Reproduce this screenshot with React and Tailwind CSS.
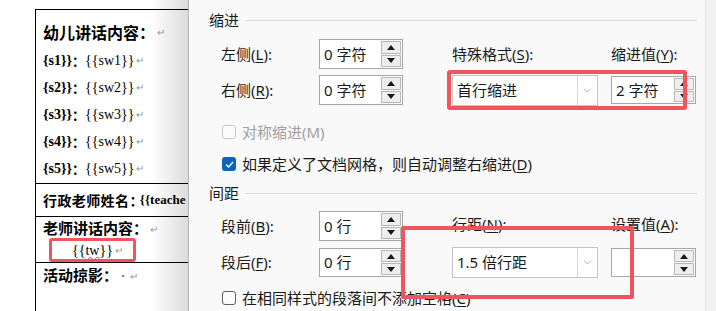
import React from "react";
import { ChevronDown } from "lucide-react";

const Arrow = ({ up }) => (
  <svg width="8" height="5" viewBox="0 0 8 5">
    <path d={up ? "M0 5 L4 0 L8 5 Z" : "M0 0 L4 5 L8 0 Z"} fill="#1a1a1a" />
  </svg>
);

const Spin = ({ value, w = "w-[85px]", h = "h-[30px]" }) => (
  <div className={`${w} ${h} flex border border-[#a6a6a6] bg-white`}>
    <div className="flex-1 flex items-center pl-[4px] text-[15px] text-[#1a1a1a]">{value}</div>
    <div className="w-[21px] flex flex-col gap-[1px] py-[1px] pr-[1px]">
      <div className="flex-1 flex items-center justify-center bg-[#eeeeee] border border-[#b8b8b8]">
        <Arrow up />
      </div>
      <div className="flex-1 flex items-center justify-center bg-[#eeeeee] border border-[#b8b8b8]">
        <Arrow />
      </div>
    </div>
  </div>
);

const Select = ({ value }) => (
  <div className="w-[146px] h-[31px] flex border border-[#c4c4c4] bg-white">
    <div className="flex-1 flex items-center pl-[4px] text-[15px] text-[#1a1a1a]">{value}</div>
    <div className="w-[20px] border-l border-[#d6d6d6] flex items-center justify-center">
      <ChevronDown size={13} strokeWidth={1} color="#6a6a6a" />
    </div>
  </div>
);

const Key = ({ k }) => <span className="underline underline-offset-2">{k}</span>;

const Section = ({ title }) => (
  <div className="h-[24px] flex items-center pl-[20px] pr-[8px]">
    <span className="text-[15px] text-[#1a1a1a]">{title}</span>
    <div className="flex-1 h-px bg-[#dedede] ml-[6px]" />
  </div>
);

const Mark = () => <span className="text-[10px] text-[#999] ml-[2px] font-normal">↵</span>;

const SLine = ({ n }) => (
  <div className="h-[27px] flex items-center text-[14px] font-['Liberation_Serif',serif] text-black">
    <span className="font-bold">{`{s${n}}}`}</span>
    <span className="font-bold font-['Noto_Sans_CJK_SC',sans-serif] text-[13px]">：</span>
    <span>{`{{sw${n}}}`}</span>
    <Mark />
  </div>
);

const App = () => {
  return (
    <div className="relative w-[716px] h-[311px] flex overflow-hidden bg-white">
      {/* document side */}
      <div className="w-[188px] h-full shrink-0 overflow-hidden bg-[linear-gradient(to_right,#ffffff_80%,#dcdcdc)] font-['Liberation_Serif','Noto_Sans_CJK_SC',serif]">
        <div className="mt-[9px] ml-[35px] w-[200px] h-[302px] border-l border-t border-black flex flex-col">
          <div className="h-[174px] border-b border-black pl-[7px] pt-[8px]">
            <div className="h-[27px] mb-[2px] flex items-center text-[16px] font-bold font-['Noto_Sans_CJK_SC',sans-serif] text-black">
              幼儿讲话内容：<Mark />
            </div>
            {[1, 2, 3, 4, 5].map((n) => (
              <SLine key={n} n={n} />
            ))}
          </div>
          <div className="h-[33px] border-b border-black pl-[7px] flex items-center whitespace-nowrap text-black font-bold">
            <span className="text-[14px] tracking-[0.4px] font-['Noto_Sans_CJK_SC',sans-serif]">行政老师姓名：</span>
            <span className="text-[13px] -ml-[4px] font-['Liberation_Serif',serif]">{"{{teache"}</span>
          </div>
          <div className="h-[46px] border-b border-black pl-[7px]">
            <div className="h-[22px] flex items-center text-[15px] font-bold font-['Noto_Sans_CJK_SC',sans-serif] text-black">
              老师讲话内容：<Mark />
            </div>
            <div className="h-[22px] flex items-center pl-[29px] text-[14px] font-['Liberation_Serif',serif] text-black">
              {"{{"}
              <span className="underline decoration-wavy decoration-red-500 decoration-1">tw</span>
              {"}}"}
              <Mark />
            </div>
          </div>
          <div className="h-[24px] pl-[7px] flex items-center text-[15px] font-bold font-['Noto_Sans_CJK_SC',sans-serif] text-black">
            活动掠影：<span className="text-[10px] text-[#666] font-normal">·</span>
            <Mark />
          </div>
        </div>
      </div>

      {/* paragraph dialog */}
      <div className="flex-1 h-full bg-[#f9f9f9] border-l border-[#b4b4b4] pt-[8px] font-['Noto_Sans','Noto_Sans_CJK_SC',sans-serif] text-[#1a1a1a]">
        <Section title="缩进" />
        <div className="ml-[32px] mt-[7px] flex items-center h-[30px] text-[15px]">
          <div className="w-[98px]">
            左侧(<Key k="L" />):
          </div>
          <Spin value="0 字符" w="w-[84px]" />
          <div className="w-[49px]" />
          <div className="w-[159px]">
            特殊格式(<Key k="S" />):
          </div>
          <div>
            缩进值(<Key k="Y" />):
          </div>
        </div>
        <div className="ml-[32px] mt-[6px] flex items-center h-[30px] text-[15px]">
          <div className="w-[98px]">
            右侧(<Key k="R" />):
          </div>
          <Spin value="0 字符" w="w-[84px]" />
          <div className="w-[49px]" />
          <Select value="首行缩进" />
          <div className="w-[13px]" />
          <Spin value="2 字符" w="w-[85px]" h="h-[28px]" />
        </div>

        <div className="ml-[33px] mt-[15px] h-[24px] flex items-center text-[15px] text-[#a0a0a0]">
          <div className="w-[14px] h-[14px] rounded-[3px] border border-[#c9c9c9] bg-[#fbfbfb] mr-[6px]" />
          对称缩进(M)
        </div>
        <div className="ml-[33px] mt-[8px] h-[24px] flex items-center text-[15px]">
          <div className="w-[14px] h-[14px] rounded-[3px] bg-[#0a64c2] mr-[6px] flex items-center justify-center">
            <svg width="9" height="7" viewBox="0 0 9 7">
              <path d="M1 3.5 L3.5 6 L8 1" stroke="white" strokeWidth="1.3" fill="none" />
            </svg>
          </div>
          如果定义了文档网格，则自动调整右缩进(<Key k="D" />)
        </div>

        <div className="mt-[5px]">
          <Section title="间距" />
        </div>
        <div className="ml-[32px] mt-[6px] flex items-center h-[30px] text-[15px]">
          <div className="w-[98px]">
            段前(<Key k="B" />):
          </div>
          <Spin value="0 行" w="w-[84px]" />
          <div className="w-[49px]" />
          <div className="w-[159px] -mt-[4px]">
            行距(<Key k="N" />):
          </div>
          <div className="-mt-[4px]">
            设置值(<Key k="A" />):
          </div>
        </div>
        <div className="ml-[32px] mt-[6px] flex items-center h-[31px] text-[15px]">
          <div className="w-[98px]">
            段后(<Key k="F" />):
          </div>
          <Spin value="0 行" w="w-[84px]" h="h-[29px]" />
          <div className="w-[49px]" />
          <Select value="1.5 倍行距" />
          <div className="w-[13px]" />
          <Spin value="" w="w-[85px]" h="h-[29px]" />
        </div>
        <div className="ml-[33px] mt-[8px] h-[24px] flex items-center text-[15px] whitespace-nowrap">
          <div className="w-[14px] h-[14px] rounded-[3px] border border-[#5e5e5e] bg-[#fdfdfd] mr-[6px]" />
          在相同样式的段落间不添加空格(<Key k="C" />)
        </div>
      </div>

      <div className="w-[11px] h-full shrink-0 bg-[#f2f2f2] border-l border-[#e2e2e2]" />

      {/* red annotation boxes */}
      <div className="absolute left-[49px] top-[238px] w-[87px] h-[24px] border-[3px] border-[#f1545c] rounded-[3px]" />
      <div className="absolute left-[447px] top-[70px] w-[240px] h-[40px] border-4 border-[#f1545c] rounded-[3px]" />
      <div className="absolute left-[401px] top-[226px] w-[233px] h-[73px] border-4 border-[#f1545c] rounded-[2px]" />
    </div>
  );
};

export default App;
